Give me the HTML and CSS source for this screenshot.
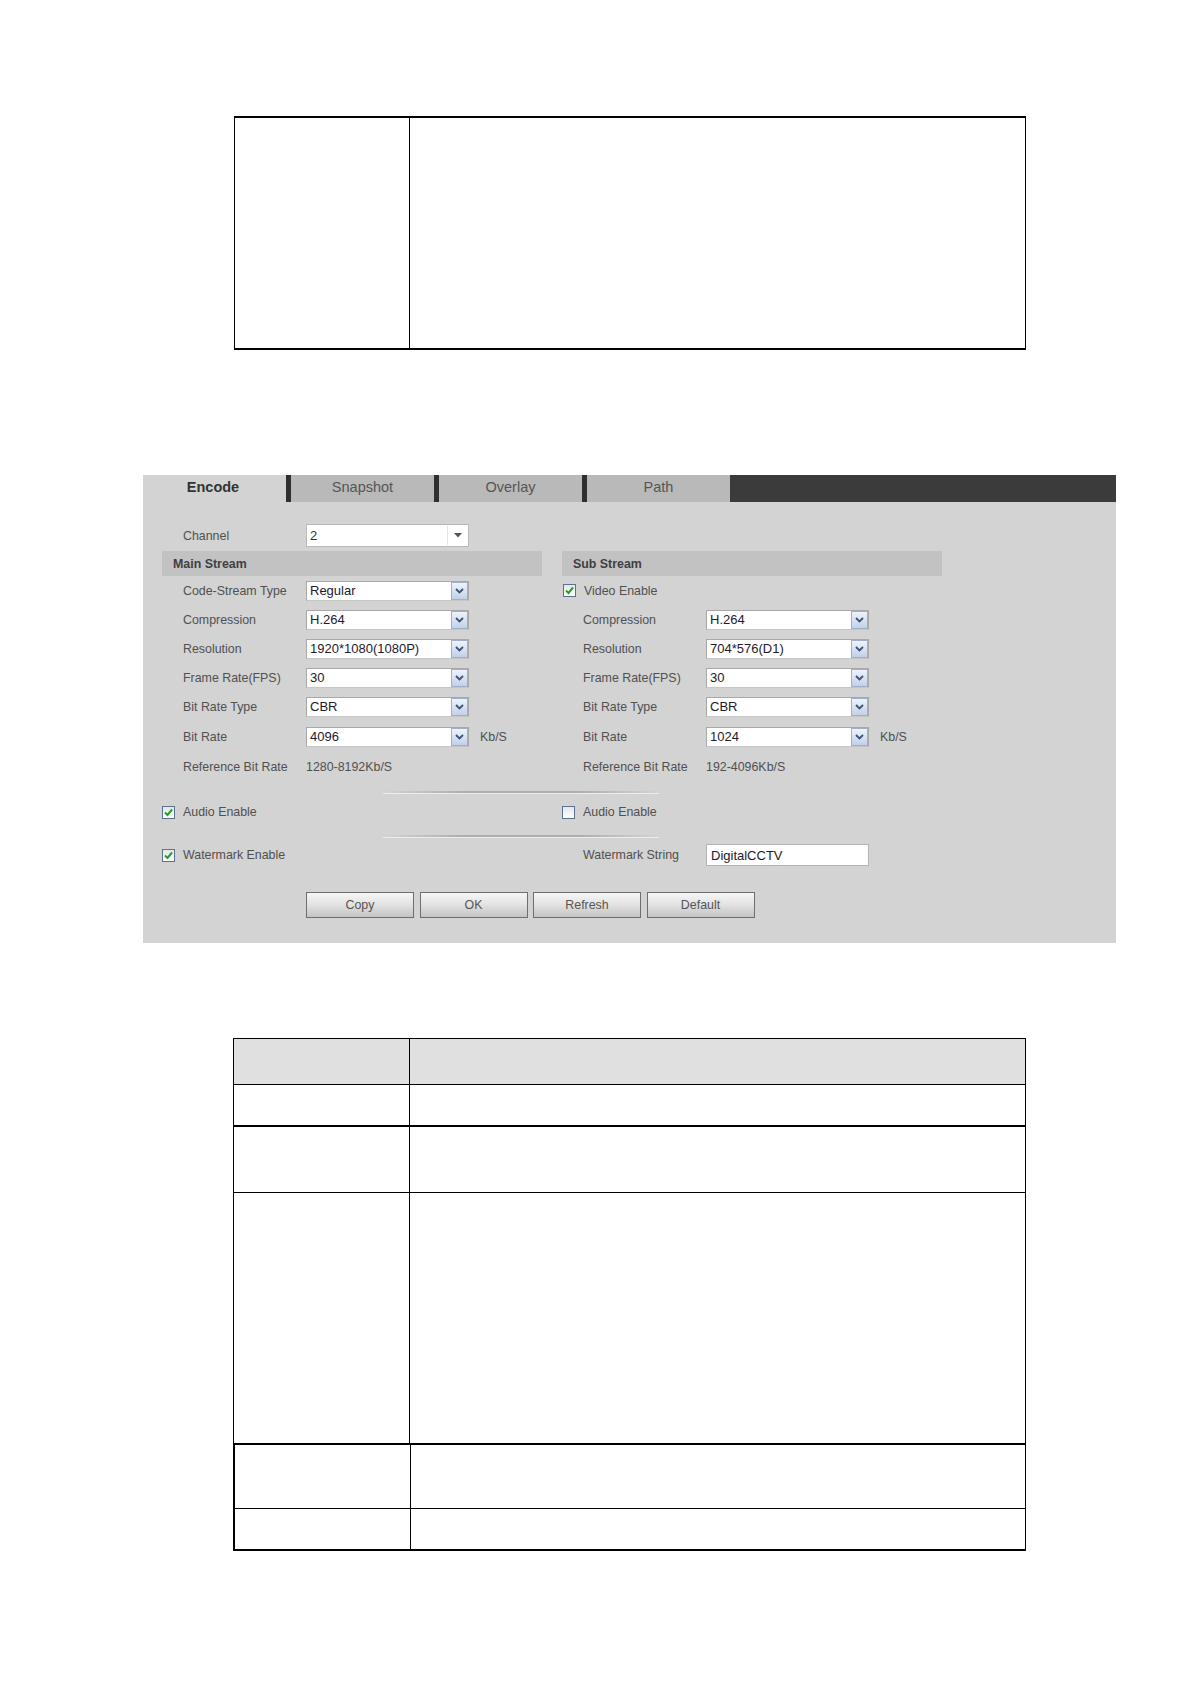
FILE: index.html
```html
<!DOCTYPE html>
<html>
<head>
<meta charset="utf-8">
<title>Encode</title>
<link rel="stylesheet" href="styles.css">
</head>
<body>
<div class="page">
  <div class="top-table">
    <div class="tcell tcell-left"></div>
    <div class="tcell"></div>
  </div>

  <div class="panel">
    <div class="tabs">
      <div class="tab tab-active">Encode</div>
      <div class="tab">Snapshot</div>
      <div class="tab">Overlay</div>
      <div class="tab">Path</div>
      <div class="tab-fill"></div>
    </div>

    <div class="channel-row">
      <span class="lbl">Channel</span>
      <div class="combo">
        <span class="val">2</span>
        <span class="combo-arr"><svg width="8" height="5" viewBox="0 0 8 5"><polygon points="0,0 8,0 4,4.5" fill="#555"/></svg></span>
      </div>
    </div>

    <div class="grid streams">
      <div class="col">
        <div class="bar">Main Stream</div>
        <div class="row"><span class="lbl">Code-Stream Type</span><div class="sel"><span class="val">Regular</span><span class="arr"><svg width="9" height="6" viewBox="0 0 9 6"><polyline points="1,1 4.5,4.5 8,1" fill="none" stroke="#3c5276" stroke-width="1.8"/></svg></span></div></div>
        <div class="row"><span class="lbl">Compression</span><div class="sel"><span class="val">H.264</span><span class="arr"><svg width="9" height="6" viewBox="0 0 9 6"><polyline points="1,1 4.5,4.5 8,1" fill="none" stroke="#3c5276" stroke-width="1.8"/></svg></span></div></div>
        <div class="row"><span class="lbl">Resolution</span><div class="sel"><span class="val">1920*1080(1080P)</span><span class="arr"><svg width="9" height="6" viewBox="0 0 9 6"><polyline points="1,1 4.5,4.5 8,1" fill="none" stroke="#3c5276" stroke-width="1.8"/></svg></span></div></div>
        <div class="row"><span class="lbl">Frame Rate(FPS)</span><div class="sel"><span class="val">30</span><span class="arr"><svg width="9" height="6" viewBox="0 0 9 6"><polyline points="1,1 4.5,4.5 8,1" fill="none" stroke="#3c5276" stroke-width="1.8"/></svg></span></div></div>
        <div class="row"><span class="lbl">Bit Rate Type</span><div class="sel"><span class="val">CBR</span><span class="arr"><svg width="9" height="6" viewBox="0 0 9 6"><polyline points="1,1 4.5,4.5 8,1" fill="none" stroke="#3c5276" stroke-width="1.8"/></svg></span></div></div>
        <div class="row row-tall"><span class="lbl">Bit Rate</span><div class="sel"><span class="val">4096</span><span class="arr"><svg width="9" height="6" viewBox="0 0 9 6"><polyline points="1,1 4.5,4.5 8,1" fill="none" stroke="#3c5276" stroke-width="1.8"/></svg></span></div><span class="unit">Kb/S</span></div>
        <div class="row row-ref"><span class="lbl">Reference Bit Rate</span><span class="txt">1280-8192Kb/S</span></div>
      </div>
      <div class="col">
        <div class="bar">Sub Stream</div>
        <div class="row row-check"><span class="cb"><svg width="13" height="13" viewBox="0 0 13 13"><polyline points="3,6.5 5.5,9 10,3.5" fill="none" stroke="#23a023" stroke-width="2"/></svg></span><span class="cb-text">Video Enable</span></div>
        <div class="row"><span class="lbl">Compression</span><div class="sel"><span class="val">H.264</span><span class="arr"><svg width="9" height="6" viewBox="0 0 9 6"><polyline points="1,1 4.5,4.5 8,1" fill="none" stroke="#3c5276" stroke-width="1.8"/></svg></span></div></div>
        <div class="row"><span class="lbl">Resolution</span><div class="sel"><span class="val">704*576(D1)</span><span class="arr"><svg width="9" height="6" viewBox="0 0 9 6"><polyline points="1,1 4.5,4.5 8,1" fill="none" stroke="#3c5276" stroke-width="1.8"/></svg></span></div></div>
        <div class="row"><span class="lbl">Frame Rate(FPS)</span><div class="sel"><span class="val">30</span><span class="arr"><svg width="9" height="6" viewBox="0 0 9 6"><polyline points="1,1 4.5,4.5 8,1" fill="none" stroke="#3c5276" stroke-width="1.8"/></svg></span></div></div>
        <div class="row"><span class="lbl">Bit Rate Type</span><div class="sel"><span class="val">CBR</span><span class="arr"><svg width="9" height="6" viewBox="0 0 9 6"><polyline points="1,1 4.5,4.5 8,1" fill="none" stroke="#3c5276" stroke-width="1.8"/></svg></span></div></div>
        <div class="row row-tall"><span class="lbl">Bit Rate</span><div class="sel"><span class="val">1024</span><span class="arr"><svg width="9" height="6" viewBox="0 0 9 6"><polyline points="1,1 4.5,4.5 8,1" fill="none" stroke="#3c5276" stroke-width="1.8"/></svg></span></div><span class="unit">Kb/S</span></div>
        <div class="row row-ref"><span class="lbl">Reference Bit Rate</span><span class="txt">192-4096Kb/S</span></div>
      </div>
    </div>

    <div class="sep sep-first"></div>

    <div class="grid pair-row audio-row">
      <div class="col-line"><span class="cb"><svg width="13" height="13" viewBox="0 0 13 13"><polyline points="3,6.5 5.5,9 10,3.5" fill="none" stroke="#23a023" stroke-width="2"/></svg></span><span class="cb-text">Audio Enable</span></div>
      <div class="col-line"><span class="cb"></span><span class="cb-text">Audio Enable</span></div>
    </div>

    <div class="sep sep-second"></div>

    <div class="grid pair-row wm-row">
      <div class="col-line"><span class="cb"><svg width="13" height="13" viewBox="0 0 13 13"><polyline points="3,6.5 5.5,9 10,3.5" fill="none" stroke="#23a023" stroke-width="2"/></svg></span><span class="cb-text">Watermark Enable</span></div>
      <div class="col-line col-inset"><span class="lbl">Watermark String</span><div class="input"><span class="val">DigitalCCTV</span></div></div>
    </div>

    <div class="buttons">
      <div class="btn">Copy</div>
      <div class="btn">OK</div>
      <div class="btn">Refresh</div>
      <div class="btn">Default</div>
    </div>
  </div>

  <div class="bottom-table">
    <div class="brow brow-head"><div class="bcell bcell-left"></div><div class="bcell"></div></div>
    <div class="brow brow-h40"><div class="bcell bcell-left"></div><div class="bcell"></div></div>
    <div class="brow brow-h65 brow-thick"><div class="bcell bcell-left"></div><div class="bcell"></div></div>
    <div class="brow brow-h250"><div class="bcell bcell-left"></div><div class="bcell"></div></div>
    <div class="brow brow-h63 brow-thick brow-wide"><div class="bcell bcell-left"></div><div class="bcell"></div></div>
    <div class="brow brow-h40 brow-wide brow-last"><div class="bcell bcell-left"></div><div class="bcell"></div></div>
  </div>
</div>
</body>
</html>
```

FILE: styles.css
```css
body {
  margin: 0;
  background: #ffffff;
  font-family: "Liberation Sans", Arial, sans-serif;
}

.page {
  padding-top: 116px;
  padding-bottom: 120px;
}

/* ---------- top document table ---------- */
.top-table {
  margin-left: 234px;
  width: 792px;
  height: 234px;
  box-sizing: border-box;
  border-top: 2px solid #000;
  border-bottom: 2px solid #000;
  border-left: 1px solid #000;
  border-right: 1px solid #000;
  display: flex;
}
.tcell { flex: 1; }
.tcell-left {
  flex: 0 0 174px;
  border-right: 1px solid #000;
}

/* ---------- encode panel ---------- */
.panel {
  margin: 125px 0 0 143px;
  width: 973px;
  background: #d3d3d3;
  padding-bottom: 25px;
  color: #505050;
  font-size: 12.4px;
}

.tabs {
  display: flex;
  height: 27px;
}
.tab {
  width: 148px;
  height: 27px;
  box-sizing: border-box;
  background: #b9b9b9;
  border-left: 5px solid #2f2f2f;
  display: flex;
  align-items: center;
  justify-content: center;
  padding-bottom: 3px;
  font-size: 14.5px;
  color: #555;
}
.tab-active {
  background: #d3d3d3;
  border-left: none;
  font-weight: bold;
  color: #333;
  padding-right: 3px;
  width: 143px;
}
.tab-fill {
  flex: 1;
  background: #3b3b3b;
}

.lbl {
  display: inline-block;
  width: 123px;
  flex: 0 0 123px;
  white-space: nowrap;
}

.channel-row {
  display: flex;
  align-items: center;
  margin-top: 22px;
  margin-bottom: 4px;
  height: 23px;
  padding-left: 40px;
}
.combo {
  width: 163px;
  height: 23px;
  box-sizing: border-box;
  border: 1px solid #b9b9b9;
  background: #fff;
  display: flex;
  align-items: center;
}
.combo .val {
  flex: 1;
  padding-left: 3px;
  font-size: 13px;
  color: #333;
}
.combo-arr {
  width: 20px;
  height: 19px;
  border-left: 1px solid #e6e6e6;
  display: flex;
  align-items: center;
  justify-content: center;
}

.grid {
  display: grid;
  grid-template-columns: 380px 380px;
  column-gap: 20px;
  padding-left: 19px;
}

.bar {
  height: 25px;
  background: #c2c2c2;
  font-weight: bold;
  color: #404040;
  display: flex;
  align-items: center;
  padding-left: 11px;
}

.row {
  display: flex;
  align-items: center;
  height: 29px;
  padding-left: 21px;
}
.row-tall { height: 31px; }
.row-ref { height: 30px; }
.row-check { padding-left: 1px; }

.sel {
  width: 163px;
  height: 20px;
  box-sizing: border-box;
  border: 1px solid #a8a8a8;
  border-bottom-color: #c6c6c6;
  background: #fff;
  display: flex;
  align-items: center;
}
.sel .val, .input .val {
  flex: 1;
  padding-left: 3px;
  font-size: 13px;
  color: #231a2c;
  white-space: nowrap;
}
.arr {
  width: 17px;
  height: 18px;
  margin-right: 0;
  box-sizing: border-box;
  border: 1px solid #9fb0c9;
  background: linear-gradient(#eef3fb, #c2d1e8);
  display: flex;
  align-items: center;
  justify-content: center;
}
.unit { margin-left: 11px; }
.txt { white-space: nowrap; }

.cb {
  width: 13px;
  height: 13px;
  box-sizing: border-box;
  border: 1px solid #58728f;
  background: linear-gradient(#e6e6e6, #ffffff);
  display: inline-flex;
  flex: 0 0 13px;
}
.cb svg { margin: -1px; }
.cb-text {
  margin-left: 8px;
  white-space: nowrap;
}

.sep {
  margin-left: 240px;
  width: 276px;
  height: 2px;
  background: linear-gradient(90deg, rgba(160,160,160,0), #adadad 30%, #adadad 70%, rgba(160,160,160,0));
  box-shadow: 0 1px 0 rgba(255,255,255,0.6);
}
.sep-first { margin-top: 9px; }
.sep-second { margin-top: 4px; }

.col-line {
  display: flex;
  align-items: center;
}
.col-inset { padding-left: 21px; }
.audio-row { height: 38px; }
.wm-row { height: 36px; }

.input {
  width: 163px;
  height: 22px;
  box-sizing: border-box;
  border: 1px solid #b3b3b3;
  background: #fff;
  display: flex;
  align-items: center;
}
.input .val { padding-left: 4px; }

.buttons {
  display: flex;
  gap: 5.5px;
  margin-top: 19px;
  padding-left: 163px;
}
.btn {
  width: 108px;
  height: 26px;
  box-sizing: border-box;
  border: 1px solid #6e6e6e;
  background: linear-gradient(#f6f6f6 0%, #e4e4e4 45%, #c4c4c4 100%);
  display: flex;
  align-items: center;
  justify-content: center;
  color: #555;
}

/* ---------- bottom document table ---------- */
.bottom-table {
  margin: 95px 0 0 233px;
  width: 793px;
}
.brow {
  display: flex;
  box-sizing: border-box;
  border-top: 1px solid #000;
  border-left: 1px solid #000;
  border-right: 1px solid #000;
}
.brow-head { height: 46px; background: #e0e0e0; }
.brow-h40 { height: 41px; }
.brow-h65 { height: 67px; }
.brow-h250 { height: 251px; }
.brow-h63 { height: 65px; }
.brow-thick { border-top-width: 2px; }
.brow-wide { border-left-width: 2px; }
.brow-last { border-bottom: 2px solid #000; height: 43px; }
.bcell { flex: 1; }
.bcell-left {
  flex: 0 0 175px;
  border-right: 1px solid #000;
}
```
